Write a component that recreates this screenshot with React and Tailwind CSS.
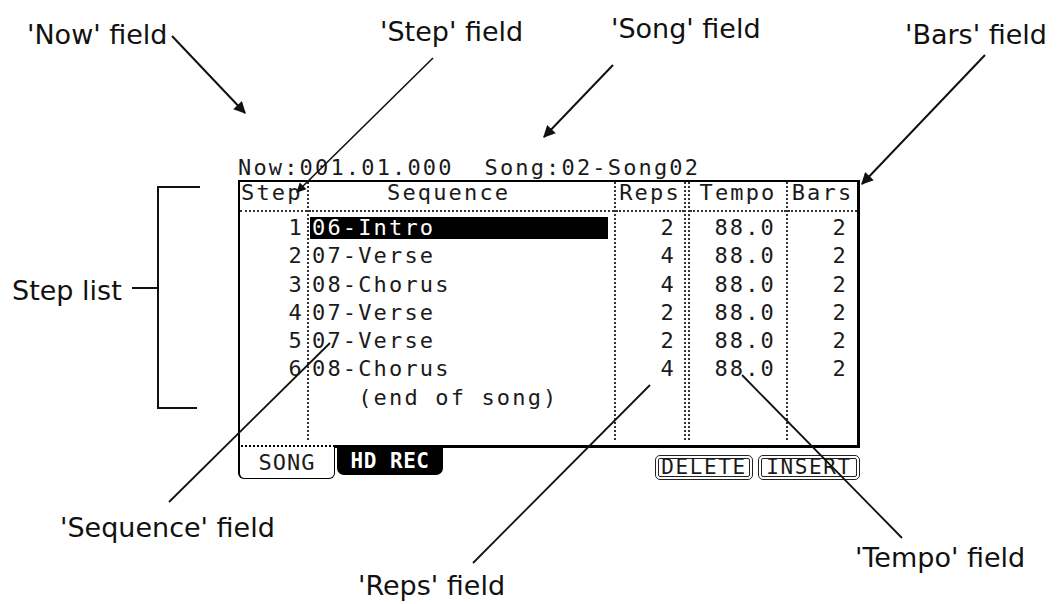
const steps = [
  { n: "1", seq: "06-Intro", reps: "2", tempo: "88.0", bars: "2", on: true },
  { n: "2", seq: "07-Verse", reps: "4", tempo: "88.0", bars: "2" },
  { n: "3", seq: "08-Chorus", reps: "4", tempo: "88.0", bars: "2" },
  { n: "4", seq: "07-Verse", reps: "2", tempo: "88.0", bars: "2" },
  { n: "5", seq: "07-Verse", reps: "2", tempo: "88.0", bars: "2" },
  { n: "6", seq: "08-Chorus", reps: "4", tempo: "88.0", bars: "2" },
];

const lcd = "font-['DejaVu_Sans_Mono',monospace] text-[22px] tracking-[2.16px] text-[#1b1b1b]";
const head = "h-[30px] border-b-2 border-dotted border-[#333] leading-[22px] whitespace-pre";
const cell = "h-[28.3px] leading-[28.3px] whitespace-pre";

function Column({ className, title, titleClass, children }) {
  return (
    <div className={`flex h-full flex-col border-dotted border-[#333] ${className}`}>
      <div className={`${head} ${titleClass}`}>{title}</div>
      <div className="pt-[2px]">{children}</div>
    </div>
  );
}

function Label({ className, children }) {
  return (
    <div className={`absolute whitespace-nowrap font-['DejaVu_Sans',sans-serif] text-[27px] leading-none text-[#111] ${className}`}>
      {children}
    </div>
  );
}

function Lcd() {
  return (
    <div className={`w-[860px] pl-[238px] pt-[157px] ${lcd}`}>
      <div className="h-[23px] whitespace-pre leading-[22px]">Now:001.01.000  Song:02-Song02</div>

      <div className="flex h-[265px] border-t-2 border-l-2 border-r-[3px] border-black pb-[5px]">
        <Column className="w-[69px] border-r-2" title="Step" titleClass="pl-[1px]">
          {steps.map((s) => (
            <div key={s.n} className={`${cell} pr-[3px] text-right`}>{s.n}</div>
          ))}
        </Column>

        <Column className="w-[307px] border-r-2" title="Sequence" titleClass="pl-[78px]">
          {steps.map((s) =>
            s.on ? (
              <div key={s.n} className="h-[28.3px] pt-[3px]">
                <div className="ml-[1px] h-[22px] w-[298px] bg-black pl-[2px] leading-[22px] text-white">{s.seq}</div>
              </div>
            ) : (
              <div key={s.n} className={`${cell} pl-[3px]`}>{s.seq}</div>
            )
          )}
          <div className={`${cell} pl-[3px]`}>{"   (end of song)"}</div>
        </Column>

        <Column className="w-[70px] border-r-2" title="Reps" titleClass="text-center">
          {steps.map((s) => (
            <div key={s.n} className={`${cell} pr-[8px] text-right`}>{s.reps}</div>
          ))}
        </Column>

        <Column className="ml-[2px] w-[100px] border-x-2" title="Tempo" titleClass="text-center">
          {steps.map((s) => (
            <div key={s.n} className={`${cell} pr-[10px] text-right`}>{s.tempo}</div>
          ))}
        </Column>

        <Column className="flex-1" title="Bars" titleClass="text-center">
          {steps.map((s) => (
            <div key={s.n} className={`${cell} pr-[9px] text-right`}>{s.bars}</div>
          ))}
        </Column>
      </div>

      <div className="flex h-[35px]">
        <div className="flex h-[34px] w-[97px] items-center justify-center rounded-b-[6px] border-t-2 border-l-2 border-r-[1.5px] border-b-[1.5px] border-black [border-top-style:dotted] text-[22px] leading-none tracking-[1px]">
          SONG
        </div>
        <div className="flex flex-1 border-t-[3px] border-black">
          <div className="ml-[2px] flex h-[27px] w-[106px] items-center justify-center rounded-b-[7px] bg-black text-[21px] font-bold leading-none tracking-[0.5px] text-white">
            HD REC
          </div>
          <div className="ml-auto mt-[7px] flex gap-[5px]">
            <div className="flex h-[25px] w-[98px] items-center justify-center rounded-[5px] border-[4px] border-double border-[#222] text-[21px] leading-none tracking-[1.6px]">
              DELETE
            </div>
            <div className="flex h-[25px] w-[102px] items-center justify-center rounded-[5px] border-[4px] border-double border-[#222] text-[21px] leading-none tracking-[1.6px]">
              INSERT
            </div>
          </div>
        </div>
      </div>
    </div>
  );
}

export default function App() {
  return (
    <div className="relative h-[604px] w-[1059px] overflow-hidden bg-white">
      <Lcd />

      <Label className="left-[27px] top-[21px]">'Now' field</Label>
      <Label className="left-[380px] top-[18px]">'Step' field</Label>
      <Label className="left-[611px] top-[15px]">'Song' field</Label>
      <Label className="left-[905px] top-[21px]">'Bars' field</Label>
      <Label className="left-[12px] top-[277px]">Step list</Label>
      <Label className="left-[60px] top-[514px]">'Sequence' field</Label>
      <Label className="left-[358px] top-[572px]">'Reps' field</Label>
      <Label className="left-[855px] top-[544px]">'Tempo' field</Label>

      <svg className="pointer-events-none absolute inset-0" width="1059" height="604" viewBox="0 0 1059 604">
        <defs>
          <marker id="head" viewBox="0 0 10 10" refX="9" refY="5" markerWidth="7" markerHeight="6" orient="auto" markerUnits="strokeWidth">
            <path d="M0 0 L10 5 L0 10 Z" fill="#111" />
          </marker>
        </defs>
        <g stroke="#111" strokeWidth="2" fill="none">
          <line x1="172" y1="36" x2="245" y2="113" markerEnd="url(#head)" />
          <line x1="433" y1="58" x2="297" y2="192" strokeWidth="1.6" markerEnd="url(#head)" />
          <line x1="613" y1="65" x2="544" y2="137" markerEnd="url(#head)" />
          <line x1="985" y1="55" x2="862" y2="184" markerEnd="url(#head)" />
          <line x1="169" y1="502" x2="330" y2="343" strokeWidth="1.8" />
          <line x1="473" y1="563" x2="650" y2="385" strokeWidth="1.8" />
          <line x1="742" y1="375" x2="902" y2="538" strokeWidth="1.8" />
          <path d="M200 187 H158 V408 H197 M132 288 H158" />
        </g>
      </svg>
    </div>
  );
}
